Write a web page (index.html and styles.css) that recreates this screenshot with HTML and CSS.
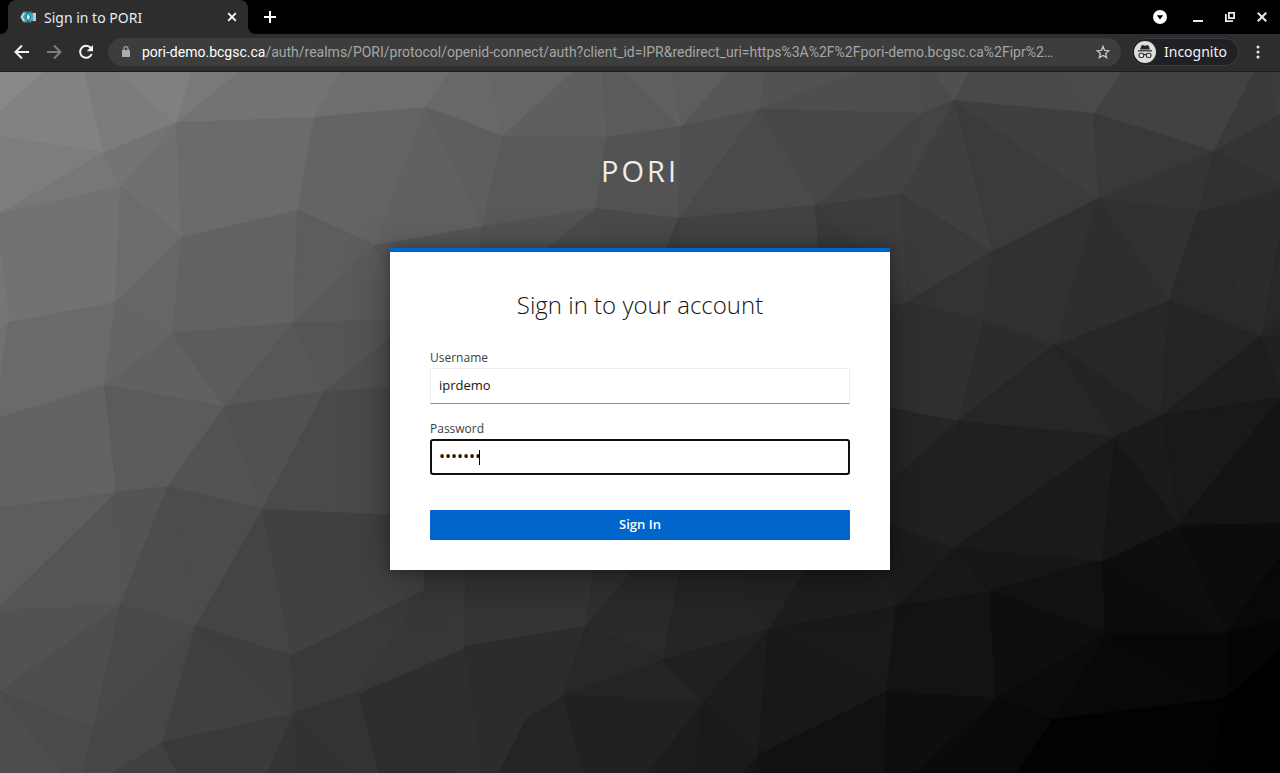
FILE: index.html
```html
<!DOCTYPE html>
<html lang="en">
<head>
<meta charset="utf-8">
<meta name="viewport" content="width=device-width, initial-scale=1">
<title>Sign in to PORI</title>
<link rel="stylesheet" href="styles.css">
</head>
<body>
<header class="chrome">
  <div class="tabstrip">
    <div class="tab">
      <svg class="favicon" viewBox="0 0 16 16" aria-hidden="true">
        <path d="M3.500 2h8l1 1.500H16v9h-3.500L11.500 14h-8L0 8z" fill="#4d4d4d"/>
        <path d="M12.500 4H16v8h-3.500z" fill="#c8c8c8"/>
        <path d="M3 3.500h3L3.500 8 6 12.500H3L.5 8z" fill="#c4d0d4"/>
        <path d="M5.500 3.500H8L5.500 8 8 12.500H5.500L3 8z" fill="#00b8e3"/>
        <path d="M8.500 3.500H11L13.500 8 11 12.500H8.500L11 8z" fill="#12bfe6"/>
        <path d="M8.200 4.500L10 8 8.200 11.500 6.500 8z" fill="#d8eef4"/>
      </svg>
      <span class="tab-title">Sign in to PORI</span>
      <button class="icon-btn tab-close" aria-label="Close tab"><svg width="10" height="10" viewBox="0 0 10 10"><path d="M1.200 1.200l7.600 7.600M8.800 1.200L1.200 8.800" stroke="#fff" stroke-width="1.800"/></svg></button>
    </div>
    <button class="icon-btn new-tab" aria-label="New tab"><svg width="12" height="12" viewBox="0 0 12 12"><path d="M6 0v12M0 6h12" stroke="#fff" stroke-width="2"/></svg></button>
    <div class="window-controls">
      <button class="icon-btn tab-search" aria-label="Search tabs"><svg width="14" height="14" viewBox="0 0 14 14"><circle cx="7" cy="7" r="7" fill="#fff"/><path d="M3.800 5.200h6.400L7 9.400z" fill="#000"/></svg></button>
      <button class="icon-btn" aria-label="Minimize"><svg width="10" height="12" viewBox="0 0 10 12"><path d="M0 10h10" stroke="#e8eaed" stroke-width="2"/></svg></button>
      <button class="icon-btn" aria-label="Restore"><svg width="10" height="10" viewBox="0 0 10 10" fill="none" stroke="#e8eaed"><path d="M3.900.9h5.200v5.200H3.900z" stroke-width="1.800"/><path d="M.9 2v7.100H8" stroke-width="1.800"/></svg></button>
      <button class="icon-btn" aria-label="Close window"><svg width="10" height="10" viewBox="0 0 10 10"><path d="M.8.8l8.400 8.400M9.200.8L.8 9.200" stroke="#e8eaed" stroke-width="2"/></svg></button>
    </div>
  </div>
  <div class="toolbar">
    <nav class="nav">
      <button class="icon-btn" aria-label="Back"><svg width="16" height="16" viewBox="0 0 16 16" fill="none" stroke="#f1f3f4" stroke-width="2"><path d="M15 8H2.500M8 1.500L1.500 8 8 14.500"/></svg></button>
      <button class="icon-btn" aria-label="Forward"><svg width="16" height="16" viewBox="0 0 16 16" fill="none" stroke="#7d7d7d" stroke-width="2"><path d="M1 8h12.500M8 1.500L14.500 8 8 14.500"/></svg></button>
      <button class="icon-btn" aria-label="Reload"><svg width="16" height="16" viewBox="0 0 16 16"><path d="M12.800 4A6 6 0 1 0 13.700 10" fill="none" stroke="#f1f3f4" stroke-width="2"/><path d="M15 1v6.300H8.700z" fill="#f1f3f4"/></svg></button>
    </nav>
    <div class="omnibox">
      <svg class="lock" width="8" height="11" viewBox="0 0 8 11"><path d="M0 4h8v7H0z" fill="#a9adb3"/><path d="M2 4.500V2.600a2 2 0 0 1 4 0v1.900" fill="none" stroke="#a9adb3" stroke-width="1.200"/></svg>
      <div class="url"><span class="host">pori-demo.bcgsc.ca</span>/auth/realms/PORI/protocol/openid-connect/auth?client_id=IPR&amp;redirect_uri=https%3A%2F%2Fpori-demo.bcgsc.ca%2Fipr%2…</div>
      <button class="icon-btn star" aria-label="Bookmark this tab"><svg width="14" height="14" viewBox="0 0 14 14"><path d="M7 1.400l1.650 3.900 4.250.4-3.200 2.800.95 4.100L7 10.400l-3.650 2.200.95-4.100-3.200-2.800 4.250-.4z" fill="none" stroke="#c4c7cb" stroke-width="1.300"/></svg></button>
    </div>
    <button class="profile">
      <svg width="22" height="22" viewBox="0 0 22 22"><circle cx="11" cy="11" r="11" fill="#dedede"/><path d="M7.600 4.200h2l1.400.5 1.400-.5h2L16 8.600H6z" fill="#262626"/><path d="M4 9.200h14v1.200H4z" fill="#262626"/><g fill="none" stroke="#262626" stroke-width="1.100"><rect x="5" y="12.300" width="4.700" height="4.200" rx="1.800"/><rect x="12.300" y="12.300" width="4.700" height="4.200" rx="1.800"/><path d="M9.700 13.800q1.300-.8 2.600 0"/></g></svg>
      <span>Incognito</span>
    </button>
    <button class="icon-btn menu" aria-label="Menu"><svg width="4" height="14" viewBox="0 0 4 14" fill="#e8eaed"><circle cx="2" cy="2" r="1.500"/><circle cx="2" cy="7" r="1.500"/><circle cx="2" cy="12" r="1.500"/></svg></button>
  </div>
</header>
<main class="page">
  <svg class="facets" viewBox="0 72 1280 701" preserveAspectRatio="xMidYMid slice" aria-hidden="true">
    <!-- upper left -->
    <polygon color="#898989" points="0,72 45,72 0,112"/>
    <polygon color="#828282" points="45,72 85,72 105,153 0,137 0,112"/>
    <polygon color="#7c7c7c" points="85,72 117,72 177,123 105,153"/>
    <polygon color="#808080" points="117,72 193,72 177,123"/>
    <polygon color="#797979" points="193,72 240,72 177,123"/>
    <polygon color="#737373" points="240,72 341,72 315,118 177,123"/>
    <polygon color="#6e6e6e" points="341,72 450,72 426,108 315,118"/>
    <polygon color="#7d7d7d" points="0,137 105,153 0,214"/>
    <polygon color="#777777" points="0,214 105,153 121,187"/>
    <polygon color="#747474" points="105,153 177,123 121,187"/>
    <polygon color="#707070" points="177,123 182,238 121,187"/>
    <polygon color="#6b6b6b" points="177,123 315,118 298,211 182,238"/>
    <polygon color="#646464" points="315,118 426,108 375,246 298,211"/>
    <polygon color="#727272" points="0,214 121,187 116,303 9,323 0,255"/>
    <polygon color="#767676" points="0,255 9,323 0,330"/>
    <polygon color="#707070" points="0,330 9,323 0,387"/>
    <polygon color="#6c6c6c" points="121,187 182,238 116,303"/>
    <polygon color="#666666" points="182,238 173,334 116,303"/>
    <polygon color="#626262" points="182,238 298,211 294,323 173,334"/>
    <polygon color="#5d5d5d" points="298,211 375,246 294,323"/>
    <polygon color="#5a5a5a" points="375,246 420,330 390,321 294,323"/>
    <!-- centre left -->
    <polygon color="#6a6a6a" points="9,323 116,303 105,386 0,418 0,387"/>
    <polygon color="#656565" points="116,303 173,334 105,386"/>
    <polygon color="#616161" points="173,334 225,407 105,386"/>
    <polygon color="#5c5c5c" points="173,334 294,323 225,407"/>
    <polygon color="#575757" points="294,323 325,392 225,407"/>
    <polygon color="#555555" points="294,323 400,321 400,330 325,392"/>
    <polygon color="#505050" points="325,392 400,330 400,388"/>
    <polygon color="#636363" points="0,418 105,386 117,493 0,508"/>
    <polygon color="#5b5b5b" points="105,386 225,407 168,487 117,493"/>
    <polygon color="#535353" points="225,407 263,510 168,487"/>
    <polygon color="#515151" points="225,407 325,392 263,510"/>
    <polygon color="#4a4a4a" points="325,392 400,388 400,516 263,510"/>
    <polygon color="#5d5d5d" points="0,508 117,493 0,608"/>
    <polygon color="#555555" points="117,493 121,605 0,612 0,608"/>
    <polygon color="#545454" points="117,493 168,487 121,605"/>
    <polygon color="#4d4d4d" points="168,487 196,627 121,605"/>
    <polygon color="#4c4c4c" points="168,487 263,510 196,627"/>
    <polygon color="#444444" points="263,510 292,656 196,627"/>
    <polygon color="#414141" points="263,510 400,516 424,540 425,591 292,656"/>
    <!-- lower left -->
    <polygon color="#525252" points="0,612 121,605 0,692"/>
    <polygon color="#4e4e4e" points="0,692 121,605 94,729"/>
    <polygon color="#494949" points="121,605 196,627 94,729"/>
    <polygon color="#464646" points="196,627 163,743 94,729"/>
    <polygon color="#404040" points="196,627 294,714 163,743"/>
    <polygon color="#3e3e3e" points="196,627 292,656 294,714"/>
    <polygon color="#393939" points="292,656 425,591 359,692 294,714"/>
    <polygon color="#4d4d4d" points="0,692 64,773 0,773"/>
    <polygon color="#4a4a4a" points="0,692 94,729 84,773 64,773"/>
    <polygon color="#464646" points="94,729 163,743 113,773 84,773"/>
    <polygon color="#404040" points="163,743 178,773 113,773"/>
    <polygon color="#3a3a3a" points="163,743 294,714 268,773 178,773"/>
    <polygon color="#343434" points="294,714 300,773 268,773"/>
    <polygon color="#323232" points="294,714 353,773 300,773"/>
    <polygon color="#333333" points="294,714 359,692 380,773 353,773"/>
    <polygon color="#2e2e2e" points="359,692 465,647 483,773 455,773"/>
    <polygon color="#2d2d2d" points="359,692 455,773 380,773"/>
    <polygon color="#373737" points="425,591 465,647 359,692"/>
    <!-- lower centre -->
    <polygon color="#383838" points="424,540 467,540 465,647 425,591"/>
    <polygon color="#343434" points="467,540 598,540 586,627 465,647"/>
    <polygon color="#303030" points="598,540 659,540 586,627"/>
    <polygon color="#2c2c2c" points="465,647 586,627 564,696 527,719 500,773 483,773"/>
    <polygon color="#2a2a2a" points="586,627 659,540 686,540 664,660"/>
    <polygon color="#282828" points="586,627 664,660 564,696"/>
    <polygon color="#252525" points="686,540 720,540 769,630 664,660"/>
    <polygon color="#242424" points="720,540 825,540 769,630"/>
    <polygon color="#242424" points="564,696 664,660 704,703"/>
    <polygon color="#202020" points="664,660 769,630 704,703"/>
    <polygon color="#252525" points="564,696 585,773 500,773 527,719"/>
    <polygon color="#212121" points="564,696 704,703 648,773 585,773"/>
    <polygon color="#1c1c1c" points="704,703 694,773 648,773"/>
    <polygon color="#1a1a1a" points="704,703 759,755 745,773 694,773"/>
    <polygon color="#1c1c1c" points="704,703 769,630 759,755"/>
    <polygon color="#151515" points="745,773 759,755 759,773"/>
    <polygon color="#1e1e1e" points="769,630 825,540 870,540 897,607"/>
    <polygon color="#191919" points="769,630 897,607 887,692"/>
    <polygon color="#181818" points="769,630 887,692 759,755"/>
    <polygon color="#121212" points="759,755 887,692 885,773 759,773"/>
    <!-- lower right -->
    <polygon color="#1c1c1c" points="870,515 890,522 955,548 897,607 870,540"/>
    <polygon color="#181818" points="955,548 990,592 897,607"/>
    <polygon color="#161616" points="955,548 1103,560 990,592"/>
    <polygon color="#131313" points="897,607 990,592 997,699 887,692"/>
    <polygon color="#111111" points="990,592 1103,560 1106,634"/>
    <polygon color="#0e0e0e" points="990,592 1106,634 997,699"/>
    <polygon color="#0c0c0c" points="1103,560 1226,634 1106,634"/>
    <polygon color="#0e0e0e" points="1103,560 1180,524 1226,634"/>
    <polygon color="#0c0c0c" points="1180,524 1280,522 1280,557 1226,634"/>
    <polygon color="#080808" points="1226,634 1280,557 1280,620"/>
    <polygon color="#050505" points="1226,634 1280,620 1280,650 1226,699"/>
    <polygon color="#070707" points="1106,634 1226,634 1226,699"/>
    <polygon color="#080808" points="1106,634 1226,699 1053,720"/>
    <polygon color="#0b0b0b" points="1106,634 1053,720 997,699"/>
    <polygon color="#0e0e0e" points="887,692 997,699 917,773 885,773"/>
    <polygon color="#0a0a0a" points="997,699 984,773 917,773"/>
    <polygon color="#090909" points="997,699 1053,720 1017,773 984,773"/>
    <polygon color="#030303" points="1053,720 1059,773 1017,773"/>
    <polygon color="#020202" points="1053,720 1226,699 1214,773 1059,773"/>
    <polygon color="#000000" points="1226,699 1280,650 1280,773 1214,773"/>
    <!-- centre right -->
    <polygon color="#323232" points="909,301 870,308 870,365"/>
    <polygon color="#303030" points="870,365 909,301 984,319 958,422 870,405"/>
    <polygon color="#2c2c2c" points="984,319 1056,344 958,422"/>
    <polygon color="#262626" points="958,422 1056,344 1116,437"/>
    <polygon color="#232323" points="1056,344 1162,416 1116,437"/>
    <polygon color="#272727" points="1056,344 1170,299 1162,416"/>
    <polygon color="#242424" points="1170,299 1262,336 1162,416"/>
    <polygon color="#1e1e1e" points="1262,336 1280,388 1280,398 1162,416"/>
    <polygon color="#212121" points="1262,336 1280,334 1280,388"/>
    <polygon color="#262626" points="870,405 958,422 870,501"/>
    <polygon color="#212121" points="870,501 958,422 955,548 870,515"/>
    <polygon color="#202020" points="958,422 1116,437 955,548"/>
    <polygon color="#1a1a1a" points="955,548 1116,437 1103,560"/>
    <polygon color="#161616" points="1116,437 1180,524 1103,560"/>
    <polygon color="#1b1b1b" points="1116,437 1162,416 1180,524"/>
    <polygon color="#191919" points="1162,416 1280,398 1280,400 1180,524"/>
    <polygon color="#141414" points="1180,524 1280,400 1280,522"/>
    <!-- upper right -->
    <polygon color="#525252" points="763,72 860,72 759,110"/>
    <polygon color="#4e4e4e" points="860,72 920,72 923,114 759,110"/>
    <polygon color="#4b4b4b" points="920,72 935,72 955,101 923,114"/>
    <polygon color="#505050" points="935,72 970,72 955,101"/>
    <polygon color="#494949" points="970,72 1061,72 1094,114 955,101"/>
    <polygon color="#4b4b4b" points="1061,72 1123,72 1094,114"/>
    <polygon color="#424242" points="1123,72 1255,72 1214,152 1094,114"/>
    <polygon color="#3a3a3a" points="1255,72 1271,72 1277,117 1214,152"/>
    <polygon color="#3d3d3d" points="1271,72 1280,72 1280,115 1277,117"/>
    <polygon color="#343434" points="1214,152 1277,117 1280,115 1280,184"/>
    <polygon color="#474747" points="759,110 923,114 816,206"/>
    <polygon color="#434343" points="923,114 901,195 816,206"/>
    <polygon color="#444444" points="923,114 955,101 901,195"/>
    <polygon color="#3f3f3f" points="955,101 993,252 901,195"/>
    <polygon color="#3b3b3b" points="955,101 1099,199 993,252"/>
    <polygon color="#3f3f3f" points="955,101 1094,114 1099,199"/>
    <polygon color="#393939" points="1094,114 1214,152 1099,199"/>
    <polygon color="#343434" points="1214,152 1199,212 1099,199"/>
    <polygon color="#313131" points="1214,152 1280,184 1280,191 1199,212"/>
    <polygon color="#3d3d3d" points="816,206 901,195 909,301"/>
    <polygon color="#3a3a3a" points="901,195 993,252 909,301"/>
    <polygon color="#333333" points="993,252 984,319 909,301"/>
    <polygon color="#313131" points="993,252 1056,344 984,319"/>
    <polygon color="#313131" points="993,252 1099,199 1056,344"/>
    <polygon color="#2e2e2e" points="1099,199 1170,299 1056,344"/>
    <polygon color="#313131" points="1099,199 1199,212 1170,299"/>
    <polygon color="#2a2a2a" points="1199,212 1262,336 1170,299"/>
    <polygon color="#2c2c2c" points="1199,212 1280,191 1280,237 1262,336"/>
    <polygon color="#282828" points="1280,237 1280,318 1262,336"/>
    <polygon color="#242424" points="1280,318 1280,334 1262,336"/>
    <!-- upper centre -->
    <polygon color="#686868" points="450,72 490,72 503,137 426,108"/>
    <polygon color="#666666" points="490,72 574,72 503,137"/>
    <polygon color="#5f5f5f" points="574,72 603,72 607,138 503,137"/>
    <polygon color="#5b5b5b" points="603,72 627,72 682,127 607,138"/>
    <polygon color="#606060" points="627,72 671,72 682,127"/>
    <polygon color="#5d5d5d" points="671,72 730,72 682,127"/>
    <polygon color="#565656" points="730,72 763,72 759,110 682,127"/>
    <polygon color="#616161" points="426,108 483,227 375,246"/>
    <polygon color="#5e5e5e" points="426,108 503,137 483,227"/>
    <polygon color="#595959" points="503,137 607,138 596,209 483,227"/>
    <polygon color="#535353" points="607,138 682,127 679,219 596,209"/>
    <polygon color="#4f4f4f" points="682,127 759,110 679,219"/>
    <polygon color="#4a4a4a" points="759,110 816,206 679,219"/>
    <polygon color="#565656" points="375,246 483,227 480,260 400,290"/>
    <polygon color="#535353" points="483,227 596,209 535,260 480,260"/>
    <polygon color="#4b4b4b" points="596,209 605,260 535,260"/>
    <polygon color="#4a4a4a" points="596,209 679,219 662,260 605,260"/>
    <polygon color="#404040" points="679,219 682,260 662,260"/>
    <polygon color="#434343" points="679,219 816,206 820,260 682,260"/>
    <polygon color="#3a3a3a" points="816,206 909,301 870,308 820,260"/>
  </svg>
  <div class="login">
    <h1 class="realm">PORI</h1>
    <section class="card">
      <h2 class="card-title">Sign in to your account</h2>
      <form class="form">
        <div class="field">
          <label for="username">Username</label>
          <input class="text-box" id="username" type="text" value="iprdemo">
        </div>
        <div class="field">
          <label for="password">Password</label>
          <div class="password-wrap">
            <input class="text-box focused" id="password" type="password" value="iprdemo">
            <span class="caret"></span>
          </div>
        </div>
        <button class="submit" type="button">Sign In</button>
      </form>
    </section>
  </div>
</main>
</body>
</html>
```
FILE: styles.css
```css
* { box-sizing: border-box; }

body {
  margin: 0;
  min-height: 100vh;
  display: flex;
  flex-direction: column;
  background: #000;
  font-family: "Open Sans", "Noto Sans", sans-serif;
}

svg { display: block; }

.chrome {
  font-family: "Noto Sans", sans-serif;
  font-size: 14px;
  color: #e8eaed;
}

.icon-btn {
  display: flex;
  align-items: center;
  justify-content: center;
  padding: 0;
  border: 0;
  background: none;
}

.tabstrip {
  display: flex;
  align-items: center;
  height: 34px;
  padding-left: 8px;
  background: #000;
}

.tab {
  position: relative;
  display: flex;
  align-items: center;
  gap: 8px;
  width: 240px;
  height: 34px;
  padding: 0 11px 0 12px;
  border-radius: 8px 8px 0 0;
  background: #2d2d2d;
}

.tab::before,
.tab::after {
  content: "";
  position: absolute;
  bottom: 0;
  width: 8px;
  height: 8px;
}

.tab::before {
  left: -8px;
  background: radial-gradient(circle at 0 0, #000 8px, #2d2d2d 8px);
}

.tab::after {
  right: -8px;
  background: radial-gradient(circle at 100% 0, #000 8px, #2d2d2d 8px);
}

.favicon { width: 16px; height: 16px; }
.tab-title { flex: 1; white-space: nowrap; }
.new-tab { margin-left: 16px; }

.window-controls {
  display: flex;
  align-items: center;
  gap: 22px;
  margin-left: auto;
  padding-right: 13px;
}

.tab-search { margin-right: 4px; }

.toolbar {
  display: flex;
  align-items: center;
  height: 38px;
  padding: 0 20px 2px 14px;
  border-bottom: 1px solid #1c1c1c;
  background: #2d2d2d;
}

.nav {
  display: flex;
  gap: 16px;
  margin-right: 14px;
}

.omnibox {
  display: flex;
  align-items: center;
  flex: 1;
  min-width: 0;
  height: 28px;
  margin-right: 10px;
  padding: 0 11px 0 14px;
  border-radius: 14px;
  background: #3d3d3d;
}

.lock { flex: none; }

.url {
  flex: 1;
  min-width: 0;
  margin-left: 12px;
  overflow: hidden;
  white-space: nowrap;
  font-family: Roboto, "Noto Sans", sans-serif;
  color: #a6a6a6;
}

.host { color: #fff; }

.profile {
  display: flex;
  align-items: center;
  gap: 8px;
  height: 28px;
  margin-right: 17px;
  padding: 0 11px 0 2px;
  border: 1px solid #3c3d40;
  border-radius: 14px;
  background: #202124;
  color: #f1f3f4;
  font: inherit;
}

.page {
  position: relative;
  flex: 1;
  overflow: hidden;
}

.facets {
  position: absolute;
  inset: 0;
  width: 100%;
  height: 100%;
}

.facets polygon {
  fill: currentColor;
  stroke: currentColor;
  stroke-width: 2;
  stroke-linejoin: round;
}

.login {
  position: relative;
  display: flex;
  flex-direction: column;
  align-items: center;
  padding: 79px 20px 40px;
}

.realm {
  margin: 0 0 57px;
  font-size: 29px;
  font-weight: 400;
  line-height: 40px;
  letter-spacing: 3px;
  color: #ededed;
}

.card {
  width: 100%;
  max-width: 500px;
  padding: 35px 40px 30px;
  border-top: 4px solid #06c;
  background: #fff;
  box-shadow: 0 8px 40px rgba(0, 0, 0, 0.35), 0 0 10px rgba(0, 0, 0, 0.25);
}

.card-title {
  margin: 0 0 25px;
  font-size: 24px;
  font-weight: 300;
  line-height: 36px;
  text-align: center;
  color: #151515;
}

.form { display: flex; flex-direction: column; }

.field { margin-bottom: 15px; }

.field label {
  display: block;
  font-size: 12px;
  line-height: 20px;
  color: #393f44;
}

.text-box {
  display: block;
  width: 100%;
  height: 36px;
  padding: 0 8px 2px;
  border: 1px solid #ededed;
  border-bottom-color: #8a8d90;
  border-radius: 0;
  background: #fff;
  font-family: "Open Sans", "Noto Sans", sans-serif;
  font-size: 13px;
  color: #151515;
}

.text-box.focused {
  padding: 0 7px 2px;
  border: 2px solid #101010;
  border-radius: 3px;
  outline: 0;
  font-size: 16px;
}

.password-wrap { position: relative; }

.caret {
  position: absolute;
  top: 11px;
  left: 49px;
  width: 1px;
  height: 15px;
  background: #000;
}

.submit {
  height: 30px;
  margin-top: 20px;
  padding: 0 0 3px;
  border: 0;
  border-radius: 1px;
  background: #06c;
  font-family: "Open Sans", "Noto Sans", sans-serif;
  font-size: 13px;
  font-weight: 600;
  color: #fff;
}
```
